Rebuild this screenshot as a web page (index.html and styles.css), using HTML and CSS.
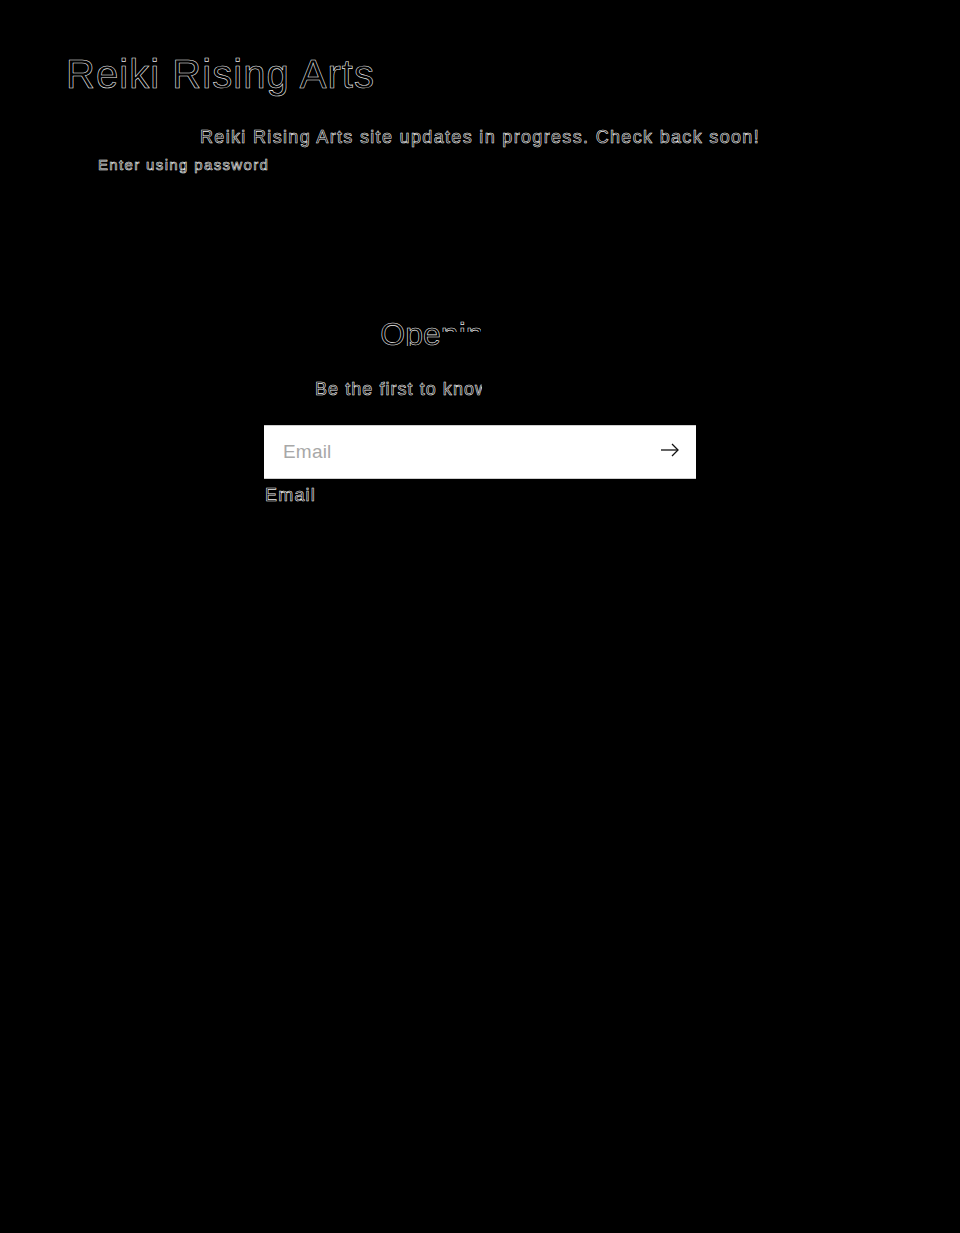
FILE: index.html
```html
<!DOCTYPE html>
<html lang="en">
<head>
<meta charset="utf-8">
<title>Reiki Rising Arts</title>
<link rel="stylesheet" href="styles.css">
</head>
<body>
  <header class="site-header">
    <h1 class="brand">Reiki Rising Arts</h1>
    <p class="announcement">Reiki Rising Arts site updates in progress. Check back soon!</p>
    <a class="enter-link" href="#">Enter using password</a>
  </header>
  <main class="newsletter">
    <div class="intro">
      <h2 class="heading">Opening soon</h2>
      <p class="subtext">Be the first to know when we launch.</p>
    </div>
    <form class="signup">
      <div class="field">
        <input class="email-input" type="email" placeholder="Email" aria-label="Email">
        <button class="submit" type="button" aria-label="Subscribe">
          <svg width="20" height="14" viewBox="0 0 20 14" fill="none" stroke="#111" stroke-width="1.3">
            <path d="M1 7h17"/>
            <path d="M12 1l6 6-6 6"/>
          </svg>
        </button>
      </div>
      <label class="field-label">Email</label>
    </form>
  </main>
</body>
</html>
```
FILE: styles.css
```css
html, body {
  margin: 0;
  padding: 0;
  background: #000;
}
body {
  font-family: "Liberation Sans", Arial, sans-serif;
  color: #000;
  min-height: 1233px;
}
.site-header, .newsletter {
  -webkit-text-stroke: 0.6px rgba(255, 255, 255, 0.95);
}
.site-header {
  padding-top: 50px;
  display: flex;
  flex-direction: column;
}
.brand {
  margin: 0 0 0 66px;
  font-size: 40px;
  line-height: 48px;
  font-weight: 400;
  letter-spacing: 1.05px;
}
.announcement {
  margin: 27px 0 0;
  text-align: center;
  font-size: 18px;
  line-height: 24px;
  letter-spacing: 1.33px;
}
.enter-link {
  margin: 6px 0 0 98px;
  font-size: 15px;
  line-height: 20px;
  letter-spacing: 1.35px;
  color: #000;
  text-decoration: none;
}
.newsletter {
  margin-top: 139px;
  display: flex;
  flex-direction: column;
  align-items: center;
}
.intro {
  width: 100%;
  text-align: center;
}
.heading {
  margin: 0;
  font-size: 32px;
  line-height: 40px;
  font-weight: 400;
  letter-spacing: 0;
  clip-path: polygon(0 0, 481px 0, 481px 18px, 440px 18px, 440px 32px, 0 32px);
}
.subtext {
  margin: 23px 0 0;
  font-size: 18px;
  line-height: 24px;
  letter-spacing: 1.05px;
  clip-path: inset(0 49.8% 0 0);
}
.signup {
  margin-top: 24px;
  width: 432px;
}
.field {
  display: flex;
  align-items: center;
  height: 54px;
  background: #fff;
  border-top: 1px solid #cfcfcf;
  border-bottom: 1px solid #cfcfcf;
  box-sizing: border-box;
  -webkit-text-stroke: 0;
}
.email-input {
  flex: 1;
  border: 0;
  outline: 0;
  background: transparent;
  padding: 0 0 0 19px;
  height: 100%;
  font-family: "Liberation Sans", Arial, sans-serif;
  font-size: 19px;
  letter-spacing: 0.2px;
  color: #000;
}
.email-input::placeholder {
  color: #a8a8a8;
}
.submit {
  border: 0;
  background: transparent;
  padding: 0;
  margin-right: 16px;
  margin-bottom: 4px;
  width: 20px;
  height: 14px;
  display: flex;
}
.field-label {
  display: block;
  margin-top: 4px;
  margin-left: 1px;
  font-size: 18px;
  line-height: 24px;
  letter-spacing: 1.2px;
}
```
